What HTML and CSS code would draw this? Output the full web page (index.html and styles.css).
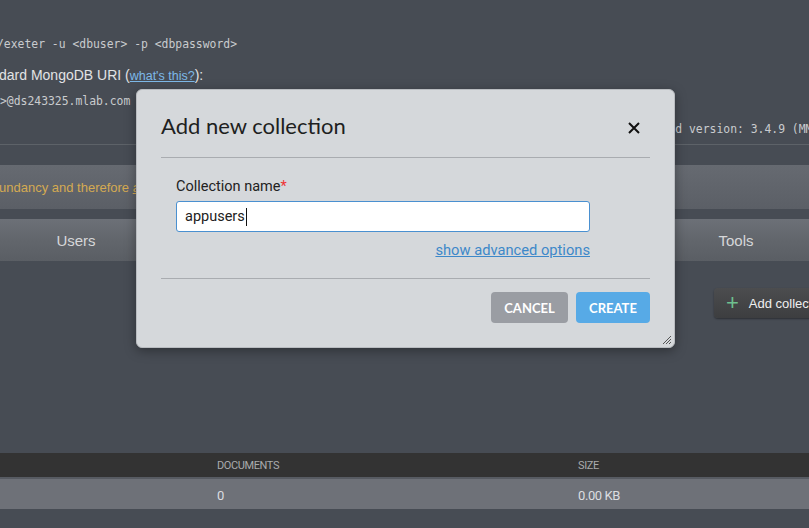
FILE: index.html
```html
<!DOCTYPE html>
<html>
<head>
<meta charset="utf-8">
<link rel="stylesheet" href="styles.css">
</head>
<body>
<div class="page">
  <div class="info">
    <div class="mono line1">/exeter -u &lt;dbuser&gt; -p &lt;dbpassword&gt;</div>
    <div class="uri">dard MongoDB URI (<a class="link">what's this?</a>):</div>
    <div class="mono line3">&gt;@ds243325.mlab.com</div>
    <div class="mono version">mongod version: 3.4.9 (MMAPv1)</div>
  </div>
  <div class="warn">undancy and therefore <u>are not suitable</u> for production use.</div>
  <div class="tabs">
    <div class="tab">Users</div>
    <div class="tab">Stats</div>
    <div class="tab">Backups</div>
    <div class="tab">Tools</div>
    <div class="tab">Tools</div>
  </div>
  <div class="actions">
    <div class="addbtn"><span class="plus">+</span>Add collection</div>
  </div>
  <div class="table">
    <div class="thead"><span class="c1"></span><span class="c2">DOCUMENTS</span><span class="c3">SIZE</span></div>
    <div class="trow"><span class="c1"></span><span class="c2">0</span><span class="c3">0.00 KB</span></div>
  </div>
</div>

<div class="modal">
  <div class="mhead">
    <h2 class="mtitle">Add new collection</h2>
    <svg class="close" width="12" height="12" viewBox="0 0 12 12"><path d="M1 1L11 11M11 1L1 11" stroke="#111" stroke-width="2"/></svg>
  </div>
  <div class="mbody">
    <label class="mlabel">Collection name<span class="req">*</span></label>
    <div class="input"><span>appusers</span><span class="caret"></span></div>
    <div class="adv"><a class="advlink">show advanced options</a></div>
  </div>
  <div class="mfoot">
    <button class="btn cancel">CANCEL</button>
    <button class="btn create">CREATE</button>
  </div>
  <svg class="grip" width="12" height="12" viewBox="0 0 12 12"><path d="M11 3L3 11M11 6L6 11M11 9L9 11" stroke="#555" stroke-width="1"/></svg>
</div>
</body>
</html>
```
FILE: styles.css
```css
html, body {
  margin: 0;
  padding: 0;
}
body {
  width: 809px;
  height: 528px;
  overflow: hidden;
  background: #474c54;
  font-family: "Liberation Sans", Arial, sans-serif;
  position: relative;
}
.page {
  display: flex;
  flex-direction: column;
}
.info {
  height: 145px;
  border-bottom: 1px solid #5d6268;
  box-sizing: border-box;
  padding-top: 36px;
  color: #d2d4d7;
}
.mono {
  font-family: "DejaVu Sans Mono", monospace;
  font-size: 11.4px;
  color: #c9cbce;
  white-space: nowrap;
}
.line1 {
  margin-left: -3px;
  height: 16px;
  line-height: 16px;
}
.uri {
  margin-top: 14px;
  font-size: 14px;
  line-height: 18px;
  color: #e2e3e5;
  margin-left: -1px;
}
.link {
  color: #7db9e8;
  text-decoration: underline;
  font-size: 12.5px;
}
.line3 {
  margin-top: 8px;
  line-height: 16px;
}
.version {
  margin-top: 12px;
  padding-left: 641px;
  line-height: 16px;
}
.warn {
  margin-top: 20px;
  height: 44px;
  background: linear-gradient(#666a71, #5b5f66);
  color: #d4aa52;
  font-size: 13px;
  line-height: 45px;
  white-space: nowrap;
  overflow: hidden;
  margin-left: -1px;
}
.tabs {
  margin-top: 10px;
  height: 42px;
  display: grid;
  grid-template-columns: 152px 170px 170px 171px 146px;
  background: linear-gradient(#6c7077 0%, #62666c 50%, #5a5e64 100%);
}
.tab {
  color: #d6d7d9;
  font-size: 15px;
  text-align: center;
  line-height: 44px;
}
.actions {
  height: 192px;
  display: flex;
  justify-content: flex-start;
  padding-left: 714px;
  padding-top: 27px;
  box-sizing: border-box;
}
.addbtn {
  height: 30px;
  width: 120px;
  flex-shrink: 0;
  box-sizing: border-box;
  border-radius: 4px;
  background: linear-gradient(#4c4d4f, #3d3e40);
  box-shadow: 0 1px 2px rgba(0,0,0,0.4);
  color: #f0f0f0;
  font-size: 13px;
  line-height: 30px;
  padding-left: 12px;
  white-space: nowrap;
}
.plus {
  color: #6ec08f;
  font-size: 22px;
  font-weight: 300;
  margin-right: 10px;
  vertical-align: -2px;
}
.table {
  display: flex;
  flex-direction: column;
}
.thead, .trow {
  display: grid;
  grid-template-columns: 217px 361px 1fr;
  font-family: "Roboto", sans-serif;
  letter-spacing: -0.4px;
}
.thead {
  height: 24px;
  line-height: 26px;
  background: #333333;
  color: #a9abad;
  font-size: 11px;
  border-bottom: 2px solid #575b62;
}
.trow {
  height: 30px;
  line-height: 33px;
  background: #6e7178;
  color: #dcdde0;
  font-size: 13px;
}

/* modal */
.modal {
  position: absolute;
  left: 136px;
  top: 89px;
  width: 539px;
  height: 259px;
  box-sizing: border-box;
  background: #d5d8db;
  border-radius: 6px;
  border: 1px solid #b9bcc0;
  box-shadow: 0 3px 12px rgba(0,0,0,0.35);
  padding: 0 24px;
  font-family: "Lato", sans-serif;
}
.mhead {
  height: 67px;
  border-bottom: 1px solid #a9acb0;
  display: flex;
  align-items: center;
  justify-content: space-between;
  padding-right: 12px;
}
.mtitle {
  margin: 0;
  font-size: 22px;
  font-weight: 400;
  color: #1e1f21;
  padding-top: 4px;
}
.close {
  margin-top: 9px;
  margin-right: -2px;
}
.mbody {
  height: 121px;
  border-bottom: 1px solid #a9acb0;
  padding: 20px 0 0 15px;
  box-sizing: border-box;
  font-family: "Roboto", sans-serif;
}
.mlabel {
  display: block;
  font-size: 14.5px;
  color: #222;
  line-height: 18px;
  margin-bottom: 5px;
}
.req {
  color: #e33;
}
.input {
  width: 414px;
  height: 31px;
  box-sizing: border-box;
  background: #fff;
  border: 1px solid #4a90d0;
  border-radius: 3px;
  padding-left: 8px;
  font-size: 14.5px;
  line-height: 29px;
  color: #222;
  display: flex;
  align-items: center;
}
.caret {
  display: inline-block;
  width: 1px;
  height: 18px;
  background: #111;
  margin-left: 1px;
}
.adv {
  width: 414px;
  text-align: right;
  margin-top: 8px;
}
.advlink {
  color: #3d88c9;
  text-decoration: underline;
  font-size: 14.7px;
}
.mfoot {
  display: flex;
  justify-content: flex-end;
  gap: 8px;
  padding-top: 13px;
}
.btn {
  height: 31px;
  border: none;
  border-radius: 4px;
  color: #fff;
  font-family: "Lato", sans-serif;
  font-weight: 700;
  font-size: 13px;
  padding: 0;
}
.cancel {
  width: 77px;
  background: #9a9da3;
}
.create {
  width: 74px;
  background: #57aae6;
}
.grip {
  position: absolute;
  right: 2px;
  bottom: 2px;
}
```
